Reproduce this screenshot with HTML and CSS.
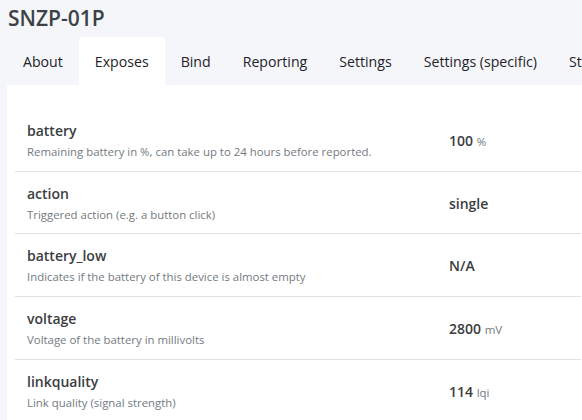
FILE: index.html
```html
<!DOCTYPE html>
<html>
<head>
<meta charset="utf-8">
<link rel="stylesheet" href="styles.css">
</head>
<body>
<div class="page">
  <h1 class="title">SNZP-01P</h1>
  <nav class="tabs">
    <span class="tab">About</span>
    <span class="tab active">Exposes</span>
    <span class="tab">Bind</span>
    <span class="tab">Reporting</span>
    <span class="tab">Settings</span>
    <span class="tab">Settings (specific)</span>
    <span class="tab">State</span>
  </nav>
  <div class="card">
    <div class="row">
      <div class="info">
        <div class="name">battery</div>
        <div class="desc">Remaining battery in %, can take up to 24 hours before reported.</div>
      </div>
      <div class="value">100 <span class="unit">%</span></div>
    </div>
    <div class="row">
      <div class="info">
        <div class="name">action</div>
        <div class="desc">Triggered action (e.g. a button click)</div>
      </div>
      <div class="value">single</div>
    </div>
    <div class="row">
      <div class="info">
        <div class="name">battery_low</div>
        <div class="desc">Indicates if the battery of this device is almost empty</div>
      </div>
      <div class="value">N/A</div>
    </div>
    <div class="row">
      <div class="info">
        <div class="name">voltage</div>
        <div class="desc">Voltage of the battery in millivolts</div>
      </div>
      <div class="value">2800 <span class="unit">mV</span></div>
    </div>
    <div class="row">
      <div class="info">
        <div class="name">linkquality</div>
        <div class="desc">Link quality (signal strength)</div>
      </div>
      <div class="value">114 <span class="unit">lqi</span></div>
    </div>
  </div>
</div>
</body>
</html>
```
FILE: styles.css
```css
html, body {
  margin: 0;
  padding: 0;
  background: #f5f6fa;
  font-family: "Open Sans", "Noto Sans", sans-serif;
  color: #212529;
  overflow: hidden;
}
.page {
  padding-left: 7px;
  width: 582px;
  overflow: hidden;
}
.title {
  margin: 0;
  padding: 4px 0 0 1px;
  height: 33px;
  font-size: 21px;
  font-weight: 600;
  color: #3c4146;
  line-height: 28px;
}
.tabs {
  display: flex;
  white-space: nowrap;
}
.tab {
  padding: 1px 16px 0;
  height: 47px;
  line-height: 47px;
  font-size: 14.15px;
  color: #1f2328;
  border-radius: 4px 4px 0 0;
}
.tab.active {
  background: #fff;
}
.card {
  background: #fff;
  padding: 24px 8px 0;
}
.row {
  display: flex;
  align-items: center;
  padding: 11px 12px 9.67px;
  border-bottom: 1px solid #dee2e6;
}
.info {
  width: 422px;
  flex: none;
}
.name {
  font-size: 14px;
  font-weight: 600;
  line-height: 21px;
  color: #3a3d41;
}
.desc {
  margin-top: 2px;
  font-size: 11.4px;
  line-height: 18px;
  color: #737a81;
}
.value {
  padding-top: 0;
  font-size: 14px;
  font-weight: 600;
  color: #3a3d41;
}
.unit {
  font-size: 11.5px;
  font-weight: 400;
  color: #737a81;
}
```
